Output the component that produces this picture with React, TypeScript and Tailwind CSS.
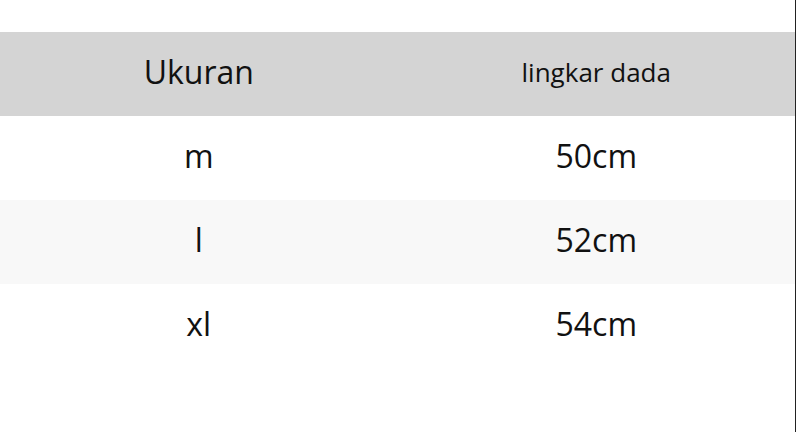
const rows = [
  { size: "m", chest: "50cm" },
  { size: "l", chest: "52cm" },
  { size: "xl", chest: "54cm" },
];

export default function App() {
  return (
    <div className="flex h-[432px] w-[796px] bg-white text-[#111]" style={{ fontFamily: '"Open Sans", "Noto Sans", sans-serif' }}>
      <div className="w-[795px] pt-8">
        <div className="grid h-[84px] grid-cols-2 items-center bg-[#d4d4d4] pb-1">
          <div className="text-center text-[32px]">Ukuran</div>
          <div className="text-center text-[26px]">lingkar dada</div>
        </div>
        {rows.map((r, i) => (
          <div
            key={r.size}
            className={
              i % 2 === 1
                ? "grid h-[84px] grid-cols-2 items-center bg-[#f8f8f8] pb-1"
                : "grid h-[84px] grid-cols-2 items-center bg-white pb-1"
            }
          >
            <div className="text-center text-[32px]">{r.size}</div>
            <div className="text-center text-[32px]">{r.chest}</div>
          </div>
        ))}
      </div>
      <div className="w-px bg-[#222]" />
    </div>
  );
}
